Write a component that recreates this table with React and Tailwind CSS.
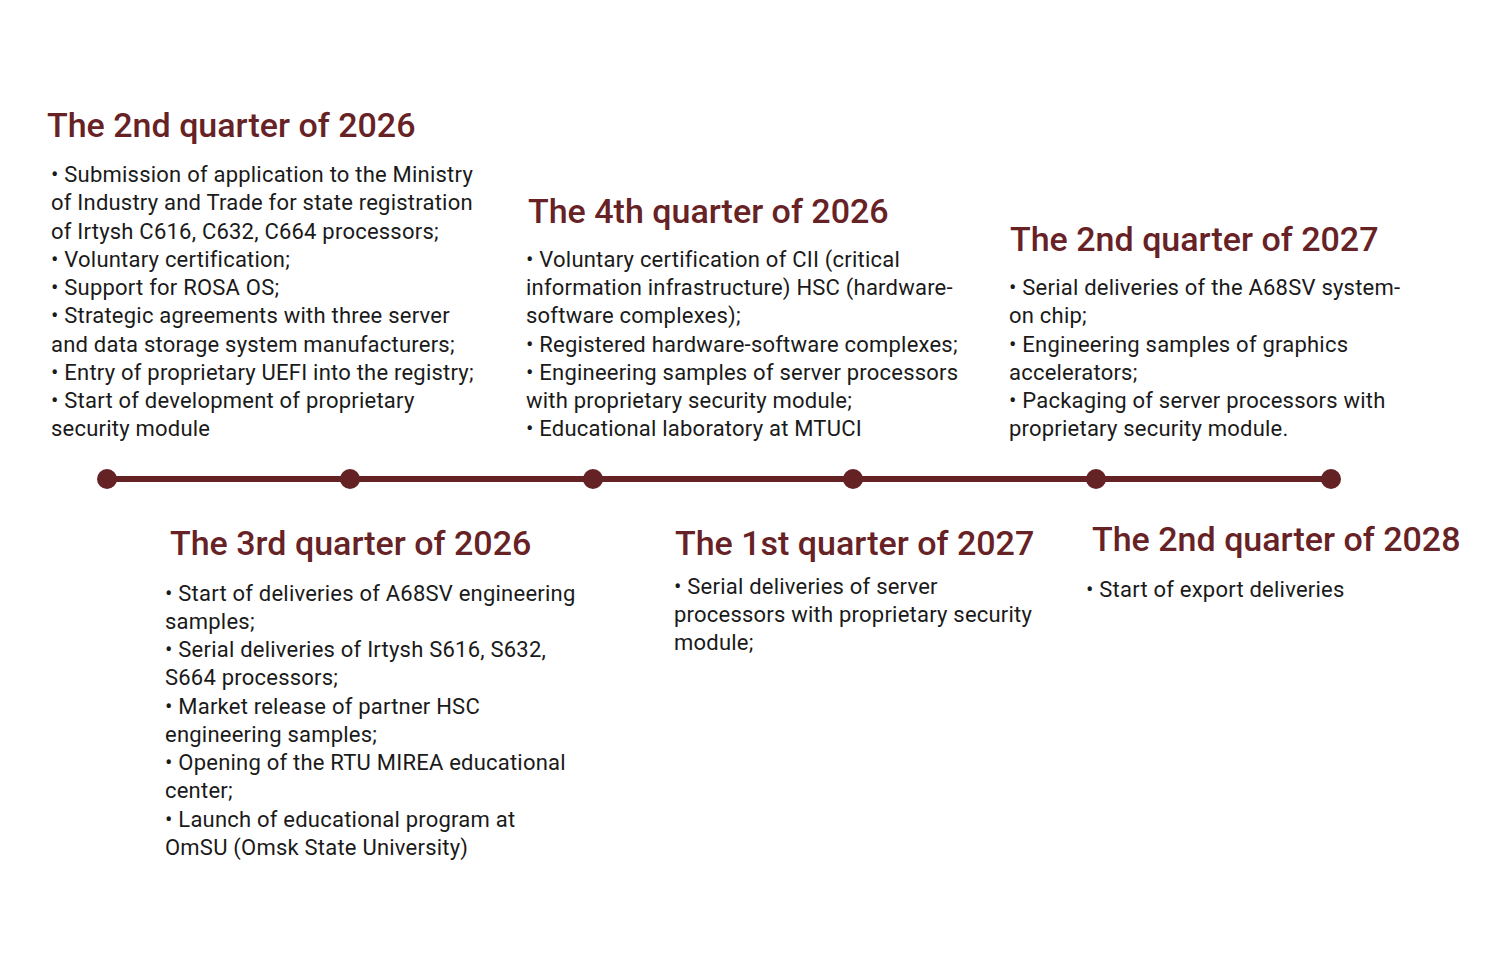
import React from 'react'

const top = [
  {
    key: 'q2-2026',
    x: 51,
    w: 475,
    titleDx: -4,
    gap: 'mb-[16px]',
    title: 'The 2nd quarter of 2026',
    lines: [
      '• Submission of application to the Ministry',
      'of Industry and Trade for state registration',
      'of Irtysh C616, C632, C664 processors;',
      '• Voluntary certification;',
      '• Support for ROSA OS;',
      '• Strategic agreements with three server',
      'and data storage system manufacturers;',
      '• Entry of proprietary UEFI into the registry;',
      '• Start of development of proprietary',
      'security module',
    ],
  },
  {
    key: 'q4-2026',
    x: 526,
    w: 483,
    titleDx: 2,
    gap: 'mb-[15px]',
    title: 'The 4th quarter of 2026',
    lines: [
      '• Voluntary certification of CII (critical',
      'information infrastructure) HSC (hardware-',
      'software complexes);',
      '• Registered hardware-software complexes;',
      '• Engineering samples of server processors',
      'with proprietary security module;',
      '• Educational laboratory at MTUCI',
    ],
  },
  {
    key: 'q2-2027',
    x: 1009,
    w: 440,
    titleDx: 1,
    gap: 'mb-[15px]',
    title: 'The 2nd quarter of 2027',
    lines: [
      '• Serial deliveries of the A68SV system-',
      'on chip;',
      '• Engineering samples of graphics',
      'accelerators;',
      '• Packaging of server processors with',
      'proprietary security module.',
    ],
  },
]

const bottom = [
  {
    key: 'q3-2026',
    x: 165,
    w: 509,
    titleDx: 5,
    offset: 'mt-[4px]',
    gap: 'mb-[17px]',
    title: 'The 3rd quarter of 2026',
    lines: [
      '• Start of deliveries of A68SV engineering',
      'samples;',
      '• Serial deliveries of Irtysh S616, S632,',
      'S664 processors;',
      '• Market release of partner HSC',
      'engineering samples;',
      '• Opening of the RTU MIREA educational',
      'center;',
      '• Launch of educational program at',
      'OmSU (Omsk State University)',
    ],
  },
  {
    key: 'q1-2027',
    x: 674,
    w: 412,
    titleDx: 1,
    offset: 'mt-[4px]',
    gap: 'mb-[10px]',
    title: 'The 1st quarter of 2027',
    lines: [
      '• Serial deliveries of server',
      'processors with proprietary security',
      'module;',
    ],
  },
  {
    key: 'q2-2028',
    x: 1086,
    w: 400,
    titleDx: 6,
    offset: 'mt-0',
    gap: 'mb-[17px]',
    title: 'The 2nd quarter of 2028',
    lines: ['• Start of export deliveries'],
  },
]

// gaps between dot edges, dots are 20px wide
const segments = [223, 223, 240, 223, 215]

function Milestone({ item }) {
  return (
    <div className={`shrink-0 ${item.offset || ''}`} style={{ width: item.w }}>
      <h2
        className={`whitespace-nowrap text-[34px] leading-[40px] font-medium text-[#672226] ${item.gap}`}
        style={{ marginLeft: item.titleDx }}
      >
        {item.title}
      </h2>
      <div className="text-[22px] leading-[28.25px] tracking-[0.01em] text-[#1a1a1a]">
        {item.lines.map((line, i) => (
          <div key={i} className="whitespace-nowrap">{line}</div>
        ))}
      </div>
    </div>
  )
}

function Row({ items, align }) {
  return (
    <div className={`flex ${align}`} style={{ paddingLeft: items[0].x }}>
      {items.map((item) => (
        <Milestone key={item.key} item={item} />
      ))}
    </div>
  )
}

export default function App() {
  return (
    <div
      className="w-[1500px] h-[972px] bg-white overflow-hidden pt-[105px]"
      style={{ fontFamily: 'Roboto, "Noto Sans", sans-serif' }}
    >
      <Row items={top} align="items-end" />

      <div className="flex items-center pl-[97px] mt-[25px]">
        {segments.map((w, i) => (
          <React.Fragment key={i}>
            <div className="w-5 h-5 rounded-full bg-[#652224] shrink-0" />
            <div className="h-[6px] bg-[#652224] shrink-0 -mx-px" style={{ width: w + 2 }} />
          </React.Fragment>
        ))}
        <div className="w-5 h-5 rounded-full bg-[#652224] shrink-0" />
      </div>

      <div className="mt-[30px]">
        <Row items={bottom} align="items-start" />
      </div>
    </div>
  )
}
